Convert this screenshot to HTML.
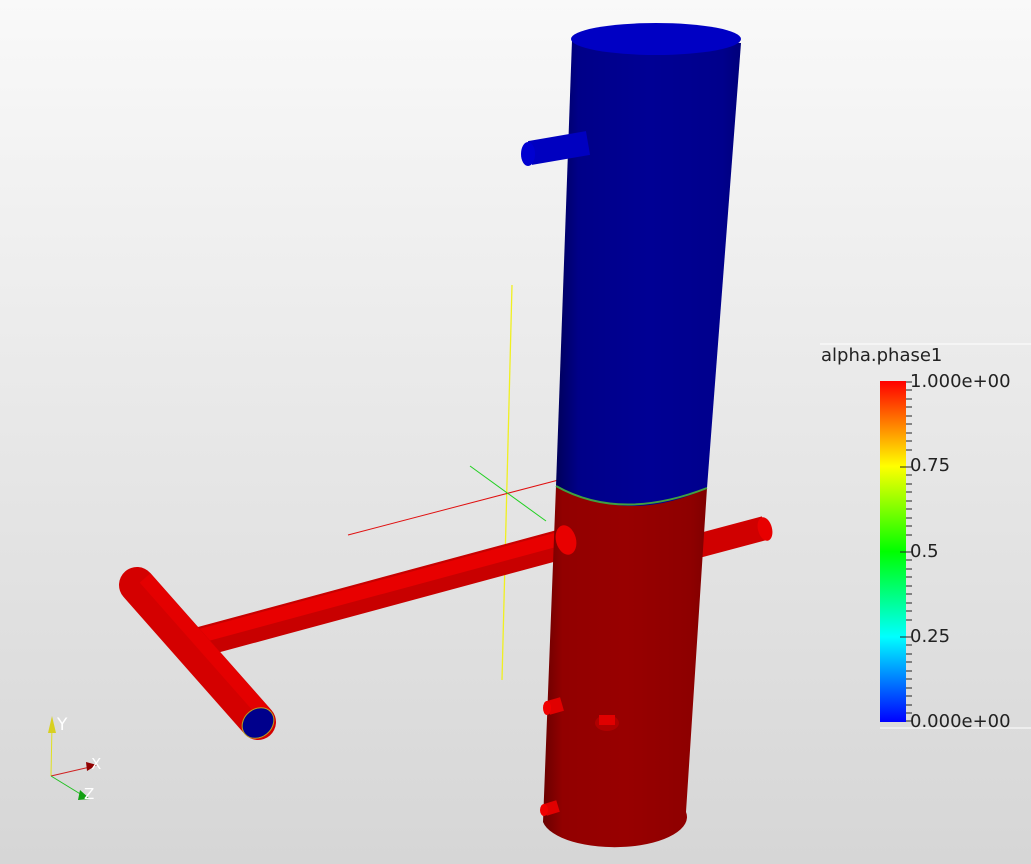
<!DOCTYPE html>
<html><head><meta charset="utf-8"><style>
html,body{margin:0;padding:0;width:1031px;height:864px;overflow:hidden}
svg{display:block}
text{font-family:"DejaVu Sans","Liberation Sans",sans-serif}
</style></head><body>
<svg width="1031" height="864" viewBox="0 0 1031 864">
<defs>
<linearGradient id="bg" x1="0" y1="0" x2="0" y2="1"><stop offset="0" stop-color="#f9f9f9"/><stop offset="1" stop-color="#d6d6d6"/></linearGradient>
<linearGradient id="blueT" x1="0" y1="0" x2="1" y2="0"><stop offset="0" stop-color="#00005a"/><stop offset="0.12" stop-color="#000088"/><stop offset="0.5" stop-color="#000094"/><stop offset="0.9" stop-color="#00008c"/><stop offset="1" stop-color="#00007a"/></linearGradient>
<linearGradient id="redT" x1="0" y1="0" x2="1" y2="0"><stop offset="0" stop-color="#6a0000"/><stop offset="0.12" stop-color="#920000"/><stop offset="0.5" stop-color="#980000"/><stop offset="0.9" stop-color="#8e0000"/><stop offset="1" stop-color="#800000"/></linearGradient>
<linearGradient id="cb" x1="0" y1="1" x2="0" y2="0"><stop offset="0" stop-color="#0000ff"/><stop offset="0.25" stop-color="#00ffff"/><stop offset="0.5" stop-color="#00ff00"/><stop offset="0.75" stop-color="#ffff00"/><stop offset="1" stop-color="#ff0000"/></linearGradient>
</defs>
<rect width="1031" height="864" fill="url(#bg)"/>

<line x1="512" y1="285" x2="502" y2="680" stroke="#f0f020" stroke-width="1.3"/>
<line x1="348" y1="535" x2="570" y2="477" stroke="#e01010" stroke-width="1"/>
<line x1="470" y1="466" x2="546" y2="521" stroke="#20d020" stroke-width="1"/>

<line x1="690" y1="548" x2="765" y2="528" stroke="#d00000" stroke-width="24"/>
<ellipse cx="765" cy="529" rx="7" ry="12" fill="#e80000" transform="rotate(-15 765 529)"/>

<line x1="200" y1="642" x2="570" y2="542" stroke="#c80000" stroke-width="30"/>
<line x1="200" y1="636" x2="570" y2="536" stroke="#e80000" stroke-width="14"/>
<line x1="137" y1="585" x2="258" y2="722" stroke="#d40000" stroke-width="36" stroke-linecap="round"/>
<line x1="145" y1="578" x2="266" y2="715" stroke="#e40000" stroke-width="14"/>
<ellipse cx="258" cy="723" rx="17" ry="14" fill="#00008c" stroke="#b8a020" stroke-width="1" transform="rotate(-40 258 723)"/>

<path d="M556 486 Q620 520 707 488 L686 812 A72 30 0 0 1 543 822 Z" fill="url(#redT)"/>
<path d="M572 40 L741 43 L707 488 Q630 525 556 486 Z" fill="url(#blueT)"/>
<path d="M556 486 Q620 522 707 488" fill="none" stroke="#40a040" stroke-width="2"/>
<ellipse cx="656" cy="39" rx="85" ry="16" fill="#0000c4"/>

<ellipse cx="566" cy="540" rx="10" ry="15" fill="#e80000" transform="rotate(-15 566 540)"/>

<line x1="530" y1="153" x2="588" y2="143" stroke="#0000c0" stroke-width="24"/>
<ellipse cx="528" cy="154" rx="7" ry="12" fill="#0000d0"/>

<line x1="548" y1="708" x2="562" y2="704" stroke="#e00000" stroke-width="14"/>
<ellipse cx="547" cy="708" rx="4" ry="7" fill="#f00000"/>
<ellipse cx="607" cy="723" rx="12" ry="8" fill="#b00000"/>
<rect x="599" y="715" width="16" height="10" fill="#e00000"/>
<line x1="545" y1="810" x2="558" y2="806" stroke="#e00000" stroke-width="12"/>
<ellipse cx="544" cy="810" rx="4" ry="6" fill="#f00000"/>

<line x1="51" y1="776" x2="52" y2="725" stroke="#e0e020" stroke-width="1"/>
<polygon points="52,716 48,733 56,733" fill="#d8d020"/>
<line x1="51" y1="776" x2="90" y2="767" stroke="#d02020" stroke-width="1"/>
<polygon points="97,765 86,762 87,771" fill="#900000"/>
<line x1="51" y1="776" x2="82" y2="795" stroke="#20c020" stroke-width="1"/>
<polygon points="90,799 80,790 78,800" fill="#10a010"/>
<text x="57" y="730" font-size="17" fill="#fff">Y</text>
<text x="91" y="769" font-size="15" fill="#fff">X</text>
<text x="84" y="799" font-size="15" fill="#fff">Z</text>

<line x1="820" y1="344" x2="1031" y2="344" stroke="#fff" stroke-width="1"/>
<text x="821" y="361" font-size="18" fill="#222">alpha.phase1</text>
<rect x="880" y="381" width="26" height="341" fill="url(#cb)"/>
<g stroke="#222" stroke-width="1">
<line x1="906" y1="382" x2="912" y2="382"/><line x1="906" y1="390" x2="912" y2="390"/><line x1="906" y1="399" x2="912" y2="399"/><line x1="906" y1="407" x2="912" y2="407"/><line x1="906" y1="416" x2="912" y2="416"/><line x1="906" y1="424" x2="912" y2="424"/><line x1="906" y1="433" x2="912" y2="433"/><line x1="906" y1="441" x2="912" y2="441"/><line x1="906" y1="450" x2="912" y2="450"/><line x1="900" y1="467" x2="912" y2="467"/><line x1="906" y1="475" x2="912" y2="475"/><line x1="906" y1="484" x2="912" y2="484"/><line x1="906" y1="492" x2="912" y2="492"/><line x1="906" y1="501" x2="912" y2="501"/><line x1="906" y1="509" x2="912" y2="509"/><line x1="906" y1="518" x2="912" y2="518"/><line x1="906" y1="526" x2="912" y2="526"/><line x1="906" y1="535" x2="912" y2="535"/><line x1="900" y1="552" x2="912" y2="552"/><line x1="906" y1="560" x2="912" y2="560"/><line x1="906" y1="569" x2="912" y2="569"/><line x1="906" y1="577" x2="912" y2="577"/><line x1="906" y1="586" x2="912" y2="586"/><line x1="906" y1="594" x2="912" y2="594"/><line x1="906" y1="603" x2="912" y2="603"/><line x1="906" y1="611" x2="912" y2="611"/><line x1="906" y1="620" x2="912" y2="620"/><line x1="900" y1="637" x2="912" y2="637"/><line x1="906" y1="645" x2="912" y2="645"/><line x1="906" y1="654" x2="912" y2="654"/><line x1="906" y1="662" x2="912" y2="662"/><line x1="906" y1="671" x2="912" y2="671"/><line x1="906" y1="679" x2="912" y2="679"/><line x1="906" y1="688" x2="912" y2="688"/><line x1="906" y1="696" x2="912" y2="696"/><line x1="906" y1="705" x2="912" y2="705"/><line x1="906" y1="713" x2="912" y2="713"/><line x1="906" y1="721" x2="912" y2="721"/>
</g>
<line x1="880" y1="728" x2="1031" y2="728" stroke="#fff" stroke-width="1"/>
<g font-size="18" fill="#222">
<text x="910" y="387">1.000e+00</text>
<text x="910" y="471">0.75</text>
<text x="910" y="557">0.5</text>
<text x="910" y="642">0.25</text>
<text x="910" y="727">0.000e+00</text>
</g>
</svg>
</body></html>
